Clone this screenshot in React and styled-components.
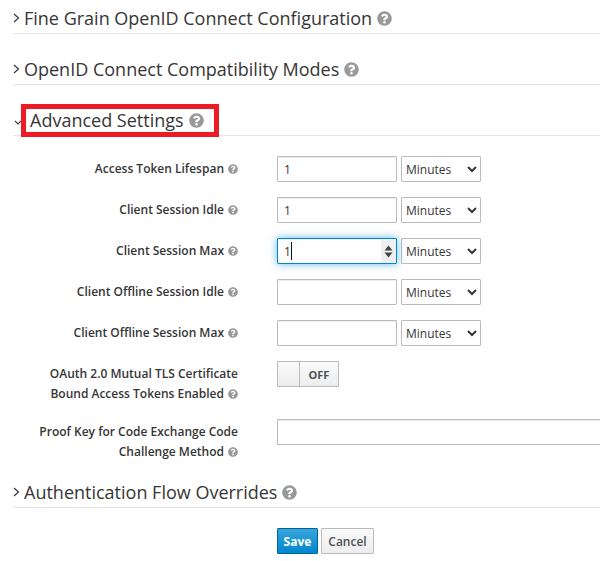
import React from "react";
import styled, { createGlobalStyle } from "styled-components";
import { FaQuestionCircle } from "react-icons/fa";

const Global = createGlobalStyle`
  html, body { margin: 0; padding: 0; background: #fff; overflow: hidden; }
  body { font-family: "Open Sans", sans-serif; color: #363636; font-size: 12px; }
`;

const Page = styled.div`
  width: 600px;
  height: 561px;
  overflow: hidden;
  padding: 5px 0 0 13px;
  box-sizing: border-box;
`;

const Legend = styled.div`
  display: flex;
  align-items: center;
  height: 26px;
  padding-bottom: 2px;
  margin-top: ${(p) => p.$top || 0}px;
  border-bottom: 1px solid #e5e5e5;
  font-size: 18px;
  line-height: 26px;
  color: #363636;
  white-space: nowrap;
`;

const Chevron = styled.svg`
  width: 7px;
  height: 10px;
  margin-right: 4px;
  flex: none;
`;

const Help = styled(FaQuestionCircle)`
  color: #999;
  width: ${(p) => p.$size}px;
  height: ${(p) => p.$size}px;
  margin-left: ${(p) => p.$gap}px;
  flex: none;
  vertical-align: -1px;
`;

const Highlight = styled.span`
  display: inline-flex;
  align-items: center;
  height: 23px;
  padding: 0 10px 0 4px;
  margin-left: -1px;
  border: 5px solid #ed1c24;
  flex: none;
`;

const Form = styled.div`
  display: flex;
  flex-direction: column;
  margin-top: 20px;
`;

const Row = styled.div`
  display: grid;
  grid-template-columns: 225px auto;
  column-gap: 39px;
  align-items: start;
  margin-bottom: ${(p) => p.$after}px;
`;

const Label = styled.label`
  text-align: right;
  font-size: 12px;
  font-weight: 600;
  line-height: 20px;
  padding-top: 3px;
  color: #363636;
`;

const Controls = styled.div`
  display: flex;
  gap: 4px;
`;

const Field = styled.div`
  position: relative;
  width: ${(p) => p.$width || 120}px;
`;

const TextInput = styled.input`
  display: block;
  width: 100%;
  height: 26px;
  box-sizing: border-box;
  border: 1px solid ${(p) => (p.$focus ? "#0088ce" : "#bbb")};
  box-shadow: ${(p) =>
    p.$focus
      ? "inset 0 1px 1px rgba(3,3,3,.075), 0 0 8px rgba(0,136,206,.6)"
      : "inset 0 1px 1px rgba(3,3,3,.075)"};
  padding: 2px 6px;
  font: 12px "Open Sans", sans-serif;
  color: #363636;
  background: #fff;
  outline: none;
  border-radius: 1px;
`;

const Spin = styled.svg`
  position: absolute;
  right: 1px;
  top: 1px;
  width: 15px;
  height: 24px;
  background: #efefef;
`;

const Caret = styled.span`
  position: absolute;
  left: 14px;
  top: 4px;
  width: 1px;
  height: 18px;
  background: #111;
`;

const Select = styled.select`
  width: 80px;
  height: 26px;
  box-sizing: border-box;
  border: 1px solid #bbb;
  border-radius: 1px;
  background: #fff;
  font: 12px "Open Sans", sans-serif;
  color: #363636;
  padding: 0;
  outline: none;
`;

const Toggle = styled.div`
  display: flex;
  width: 62px;
  height: 26px;
  box-sizing: border-box;
  border: 1px solid #bbb;
  border-radius: 1px;
  overflow: hidden;
`;

const Knob = styled.span`
  width: 21px;
  border-right: 1px solid #bbb;
  background: linear-gradient(#fafafa, #ededed);
`;

const Off = styled.span`
  flex: 1;
  display: flex;
  align-items: center;
  justify-content: center;
  font-size: 11px;
  font-weight: 700;
  color: #4d5258;
  background: linear-gradient(#fafafa, #ededed);
`;

const Actions = styled.div`
  display: flex;
  gap: 3px;
  margin: 20px 0 0 264px;
`;

const Button = styled.button`
  height: 26px;
  padding: 0;
  width: ${(p) => p.$width}px;
  box-sizing: border-box;
  border-radius: 1px;
  font: ${(p) => (p.$primary ? 700 : 600)} 12px "Open Sans", sans-serif;
  border: 1px solid ${(p) => (p.$primary ? "#00659c" : "#bbb")};
  color: ${(p) => (p.$primary ? "#fff" : "#4d5258")};
  background: ${(p) =>
    p.$primary
      ? "linear-gradient(#39a5dc, #0088ce)"
      : "linear-gradient(#fafafa, #ededed)"};
`;

const Right = () => (
  <Chevron viewBox="0 0 7 10">
    <path d="M1 1l4.5 4L1 9" fill="none" stroke="#363636" strokeWidth="1.2" />
  </Chevron>
);

const Down = styled.svg`
  width: 8px;
  height: 5px;
  margin: 4px 0 0 1px;
  flex: none;
`;

const rows = [
  ["Access Token Lifespan", "1"],
  ["Client Session Idle", "1"],
  ["Client Session Max", "1", true],
  ["Client Offline Session Idle", ""],
  ["Client Offline Session Max", ""],
];

const HelpSmall = () => <Help $size={10} $gap={4} />;

export default function App() {
  return (
    <Page>
      <Global />
      <Legend>
        <Right />
        Fine Grain OpenID Connect Configuration
        <Help $size={15} $gap={5} />
      </Legend>
      <Legend $top={22}>
        <Right />
        OpenID Connect Compatibility Modes
        <Help $size={15} $gap={5} />
      </Legend>
      <Legend $top={22}>
        <Down viewBox="0 0 8 5">
          <path d="M1 1l3 3 3-3" fill="none" stroke="#363636" strokeWidth="1.1" />
        </Down>
        <Highlight>
          Advanced Settings
          <Help $size={15} $gap={5} />
        </Highlight>
      </Legend>
      <Form>
        {rows.map(([label, value, focus]) => (
          <Row key={label} $after={15}>
            <Label>
              {label}
              <HelpSmall />
            </Label>
            <Controls>
              <Field>
                <TextInput defaultValue={value} $focus={focus} readOnly />
                {focus && (
                  <>
                    <Caret />
                    <Spin viewBox="0 0 15 24">
                      <path d="M7.5 6.5l4 5h-8z M7.5 18.5l4-5h-8z" fill="#444" />
                    </Spin>
                  </>
                )}
              </Field>
              <Select defaultValue="Minutes">
                <option>Minutes</option>
              </Select>
            </Controls>
          </Row>
        ))}
        <Row $after={15}>
          <Label>
            OAuth 2.0 Mutual TLS Certificate
            <br />
            Bound Access Tokens Enabled
            <HelpSmall />
          </Label>
          <Toggle>
            <Knob />
            <Off>OFF</Off>
          </Toggle>
        </Row>
        <Row $after={0}>
          <Label>
            Proof Key for Code Exchange Code
            <br />
            Challenge Method
            <HelpSmall />
          </Label>
          <Field $width={340}>
            <TextInput readOnly />
          </Field>
        </Row>
      </Form>
      <Legend $top={17}>
        <Right />
        Authentication Flow Overrides
        <Help $size={15} $gap={5} />
      </Legend>
      <Actions>
        <Button $primary $width={41}>Save</Button>
        <Button $width={53}>Cancel</Button>
      </Actions>
    </Page>
  );
}
